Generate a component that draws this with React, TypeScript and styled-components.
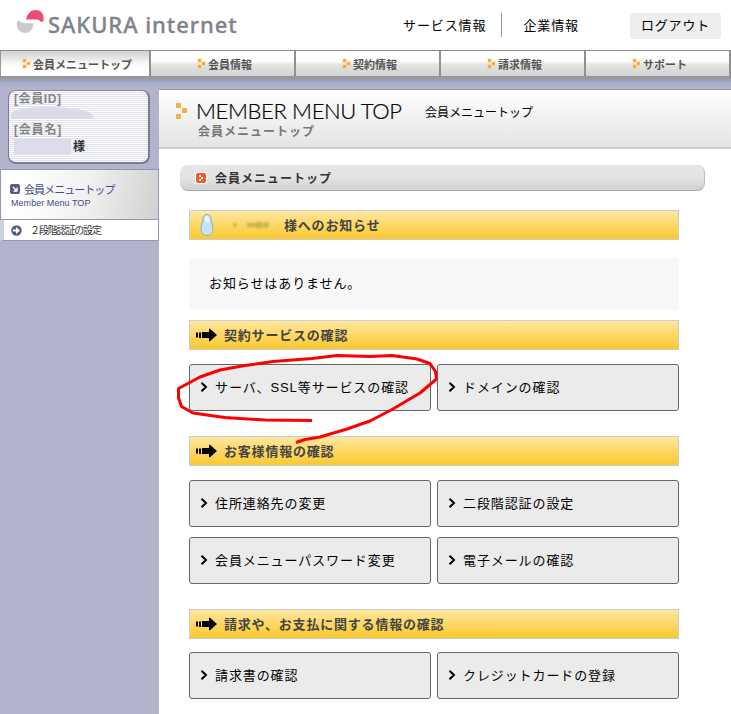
import React from "react";
import styled, { createGlobalStyle, css } from "styled-components";

const Global = createGlobalStyle`
  * { box-sizing: border-box; }
  body {
    margin: 0;
    background: #fff;
    font-family: "Liberation Sans", "Noto Sans CJK JP", sans-serif;
    color: #000;
  }
`;

const Page = styled.div`
  position: relative;
  width: 731px;
  height: 714px;
  overflow: hidden;
  display: flex;
  flex-direction: column;
`;

/* ---------- text ---------- */

const Label = styled.span<{
  $size: number;
  $track?: number;
  $weight?: number;
  $color?: string;
}>`
  padding-top: 2px;
  font-family: "Liberation Sans", "Noto Sans CJK JP", sans-serif;
  font-size: ${(p) => p.$size}px;
  letter-spacing: ${(p) => p.$track ?? 0}px;
  font-weight: ${(p) => p.$weight ?? 400};
  color: ${(p) => p.$color ?? "#000"};
  line-height: 16px;
  white-space: nowrap;
`;

/* ---------- header ---------- */

const Header = styled.header`
  height: 50px;
  flex: none;
  display: flex;
  align-items: flex-start;
  padding: 9px 10px 0 16px;
`;

const LogoMark = styled.svg`
  width: 28px;
  height: 25px;
  flex: none;
`;

const LogoText = styled.div`
  margin-left: 4px;
  font-family: "Noto Sans", sans-serif;
  font-size: 22px;
  line-height: 31px;
  font-weight: 500;
  letter-spacing: 0.93px;
  color: #82828c;
  -webkit-text-stroke: 0.3px #82828c;
  white-space: nowrap;
`;

const HeaderLinks = styled.div`
  display: flex;
  align-items: center;
  height: 32px;
  margin-left: auto;
`;

const Divider = styled.i`
  width: 1px;
  height: 24px;
  background: #999;
  margin: 0 21px 0 15px;
`;

const Logout = styled.button`
  width: 91px;
  height: 26px;
  margin: 1px 0 0 51px;
  padding: 0 0 2px 11px;
  display: flex;
  align-items: center;
  border: 0;
  border-radius: 3px;
  background: #eee;
`;

/* ---------- navigation ---------- */

const Nav = styled.nav`
  flex: none;
  height: 29px;
  display: grid;
  grid-template-columns: 151px 145px 145px 145px 145px;
  border-top: 1px solid #8c8c8c;
  border-bottom: 3px solid #989898;
`;

const Tab = styled.a<{ $active?: boolean }>`
  display: flex;
  align-items: center;
  justify-content: center;
  gap: 1px;
  padding: 0 0 0 5px;
  border-right: 2px solid #909090;
  background: ${(p) =>
    p.$active
      ? "linear-gradient(#d6d6d6 8%, #f4f4f4 45%, #fff 65%)"
      : "linear-gradient(#fff 0, #fff 40%, #e4e4e4 55%, #d2d2d2 100%)"};
  ${(p) => p.$active && css`
    border-left: 1px solid #999;
  `}
`;

const TabDots = styled.svg`
  width: 9px;
  height: 11px;
  overflow: visible;
  filter: drop-shadow(0 0 1.5px #ffc568);
`;

/* ---------- body ---------- */

const Body = styled.div`
  flex: 1;
  display: flex;
  background: linear-gradient(#939cba 0, #a8adcb 4px, #b3b3cc 9px);
`;

const Sidebar = styled.aside`
  width: 159px;
  flex: none;
  padding-top: 11px;
`;

const MemberCard = styled.section`
  width: 142px;
  height: 74px;
  margin-left: 8px;
  padding: 0 0 0 5px;
  border: 1px solid #777b98;
  border-top-color: #8588a2;
  border-width: 1px 2px 2px 1px;
  border-radius: 8px;
  background: repeating-linear-gradient(#fcfcff 0 1px, #e2e2ee 1px 2px);
  display: flex;
  flex-direction: column;
`;

const CardLine = styled.div<{ $h: number }>`
  height: ${(p) => p.$h}px;
  padding-bottom: 2px;
  display: flex;
  align-items: center;
`;

const Masked = styled.i<{ $w: number; $h: number; $round?: boolean }>`
  width: ${(p) => p.$w}px;
  height: ${(p) => p.$h}px;
  margin-left: ${(p) => (p.$round ? -3 : 0)}px;
  margin-right: 2px;
  background: #dcdbea;
  border-radius: ${(p) => (p.$round ? "40% 50% 0 0 / 60% 80% 0 0" : "0")};
`;

const SideTop = styled.a`
  display: block;
  height: 51px;
  margin-top: 5px;
  padding: 11px 0 0 9px;
  border: 1px solid #9794b4;
  background: linear-gradient(100deg, #fff 15%, #f0f0f0 55%, #cdcdcd 105%);
`;

const SideRow = styled.div`
  display: flex;
  align-items: center;
  gap: 4px;
  height: 15px;
`;

const SideLatin = styled.div`
  margin: 1px 0 0 1px;
  font-size: 9px;
  line-height: 12px;
  letter-spacing: 0.05px;
  color: #454a80;
  white-space: nowrap;
`;

const SideSub = styled.a`
  display: flex;
  align-items: center;
  gap: 8px;
  height: 21px;
  padding-left: 7px;
  border: 1px solid #9794b4;
  border-top: 0;
  border-left: 4px solid #cbd0de;
  background: #fff;
`;

const Main = styled.main`
  flex: 1;
  margin-top: 10px;
  border-top: 1px solid #9296ae;
  background: #fff;
`;

const TitleBar = styled.div`
  height: 59px;
  display: flex;
  align-items: flex-start;
  padding: 11px 0 0 17px;
  border-bottom: 2px solid #cbcbcb;
  background: linear-gradient(#fff, #e4e4e4);
`;

const TitleDots = styled.svg`
  width: 11px;
  height: 17px;
  margin: 2px 9px 0 0;
`;

const TitleStack = styled.div`
  width: 229px;
  display: flex;
  flex-direction: column;
`;

const TitleLatin = styled.h1`
  margin: 0;
  font-family: Lato, sans-serif;
  font-weight: 300;
  font-size: 22px;
  line-height: 20px;
  letter-spacing: -0.38px;
  -webkit-text-stroke: 0.2px #000;
  white-space: nowrap;
`;

const TitleSub = styled.div`
  margin: 1px 0 0 2px;
  line-height: 16px;
  display: flex;
`;

const Crumb = styled.div`
  display: flex;
  margin-top: 2px;
`;

const PageBar = styled.div`
  width: 525px;
  height: 26px;
  margin: 16px 0 0 21px;
  padding-left: 15px;
  display: flex;
  align-items: center;
  gap: 8px;
  border-radius: 8px;
  border-bottom: 1px solid #aaa;
  border-right: 1px solid #bbb;
  background: linear-gradient(#e6e6e6, #e3e3e3 50%, #d2d2d2);
`;

const Content = styled.div`
  width: 490px;
  margin: 19px 0 0 30px;
`;

const SectionHead = styled.div<{ $inset?: number }>`
  height: 30px;
  display: flex;
  align-items: center;
  padding-left: ${(p) => p.$inset ?? 6}px;
  gap: 7px;
  border: 1px solid #ccc;
  background: linear-gradient(#ffe79f, #fac82d);
`;

const Smudge = styled.svg`
  width: 53px;
  height: 12px;
  margin: 0 3px 0 0;
  filter: blur(1.2px);
`;

const Notice = styled.div`
  height: 52px;
  margin: 18px 0 10px;
  padding: 0 0 2px 20px;
  display: flex;
  align-items: center;
  background: #f8f8f8;
`;

const Grid = styled.div<{ $top: number; $bottom: number }>`
  display: grid;
  grid-template-columns: 242px 242px;
  gap: 10px 6px;
  margin: ${(p) => p.$top}px 0 ${(p) => p.$bottom}px;
`;

const Choice = styled.a`
  height: 47px;
  padding: 0 0 1px 10px;
  display: flex;
  align-items: center;
  gap: 7px;
  border: 1px solid #666;
  border-radius: 3px;
  background: #ebebeb;
`;

const Icon = styled.svg<{ $w: number; $h: number }>`
  width: ${(p) => p.$w}px;
  height: ${(p) => p.$h}px;
  flex: none;
`;

const Annotation = styled.svg`
  position: absolute;
  left: 0;
  top: 0;
  width: 731px;
  height: 714px;
  pointer-events: none;
`;

function Dots() {
  return (
    <TabDots viewBox="0 0 9 11" fill="#f7ab35">
      <rect x="0" y="1" width="3" height="3" />
      <rect x="4" y="4" width="3" height="3" />
      <rect x="0" y="7" width="3" height="3" />
    </TabDots>
  );
}

function Arrow() {
  return (
    <Icon $w={21} $h={14} viewBox="0 0 21 14">
      <path d="M0 4.500h2v5H0zM3 4.500h2v5.500H3zM6 4h7V.8h1L21 7l-7 6.300h-1V10H6z" />
    </Icon>
  );
}

function Chevron() {
  return (
    <Icon $w={8} $h={10} viewBox="0 0 8 10" fill="none" stroke="#000" strokeWidth="2">
      <path d="M1.500 .8 6 5 1.500 9.200" />
    </Icon>
  );
}

function Section({
  title,
  items,
  top = 14,
  bottom = 25,
}: {
  title: string;
  items: string[];
  top?: number;
  bottom?: number;
}) {
  return (
    <>
      <SectionHead>
        <Arrow />
        <Label $size={13} $track={0.8} $weight={700} $color="#444">{title}</Label>
      </SectionHead>
      <Grid $top={top} $bottom={bottom}>
        {items.map((item) => (
          <Choice key={item}>
            <Chevron />
            <Label $size={13} $track={0.9}>{item}</Label>
          </Choice>
        ))}
      </Grid>
    </>
  );
}

const tabs = ["会員メニュートップ", "会員情報", "契約情報", "請求情報", "サポート"];

export default function App() {
  return (
    <Page>
      <Global />
      <Header>
        <LogoMark viewBox="0 0 28 25">
          <path d="M10 10.500C11.500 4 15 1 20 1c5 0 8.500 4 7.500 10.500-.5 1-1.500 1.500-2.500 1.500-1-2-3-2.500-6-2.500z" fill="#ea4e73" />
          <path d="M1 12.500c1.500-1.500 3-.5 4 .5 2 1.500 6 1 12.500 1.500C17 20 14 24 9 24c-5.500 0-9-5-8-11.500z" fill="#cbcbcd" />
        </LogoMark>
        <LogoText>SAKURA internet</LogoText>
        <HeaderLinks>
          <Label $size={13} $track={0.9}>サービス情報</Label>
          <Divider />
          <Label $size={13} $track={0.9}>企業情報</Label>
          <Logout>
            <Label $size={13} $track={0.8}>ログアウト</Label>
          </Logout>
        </HeaderLinks>
      </Header>

      <Nav>
        {tabs.map((tab, i) => (
          <Tab key={tab} $active={i === 0}>
            <Dots />
            <Label $size={11} $weight={700} $color="#555">{tab}</Label>
          </Tab>
        ))}
      </Nav>

      <Body>
        <Sidebar>
          <MemberCard>
            <CardLine $h={15}><Label $size={12} $track={0.6} $weight={700} $color="#858585">[会員ID]</Label></CardLine>
            <CardLine $h={16}><Masked $w={82} $h={12} $round /></CardLine>
            <CardLine $h={15}><Label $size={12} $track={0.8} $weight={700} $color="#858585">[会員名]</Label></CardLine>
            <CardLine $h={20}>
              <Masked $w={57} $h={15} />
              <Label $size={12} $weight={700} $color="#333">様</Label>
            </CardLine>
          </MemberCard>
          <SideTop>
            <SideRow>
              <Icon $w={10} $h={10} viewBox="0 0 10 10">
                <rect width="10" height="10" rx="2" fill="#555a87" />
                <path d="M3 3l4 4M7 3.500V7H3.500" stroke="#fff" strokeWidth="1.300" fill="none" />
              </Icon>
              <Label $size={11} $track={-0.95} $color="#454a80">会員メニュートップ</Label>
            </SideRow>
            <SideLatin>Member Menu TOP</SideLatin>
          </SideTop>
          <SideSub>
            <Icon $w={11} $h={11} viewBox="0 0 11 11">
              <circle cx="5.500" cy="5.500" r="5.200" fill="#555a87" />
              <path d="M2 4.500h3V2l4 3.500L5 9V6.500H2z" fill="#fff" />
            </Icon>
            <Label $size={10} $track={-1.15} $color="#333">２段階認証の設定</Label>
          </SideSub>
        </Sidebar>

        <Main>
          <TitleBar>
            <TitleDots viewBox="0 0 11 17" fill="#f7b045">
              <rect x="0" y="0" width="5" height="5" />
              <rect x="6" y="5" width="5" height="5" />
              <rect x="0" y="11" width="5" height="5" />
            </TitleDots>
            <TitleStack>
              <TitleLatin>MEMBER MENU TOP</TitleLatin>
              <TitleSub>
                <Label $size={12} $track={1} $weight={700} $color="#777">会員メニュートップ</Label>
              </TitleSub>
            </TitleStack>
            <Crumb><Label $size={12}>会員メニュートップ</Label></Crumb>
          </TitleBar>

          <PageBar>
            <Icon $w={12} $h={12} viewBox="0 0 12 12">
              <rect width="12" height="12" rx="2.500" fill="#fff" />
              <rect x="1" y="1" width="10" height="10" rx="2" fill="#ee5a2c" />
              <path d="M4 3h2v2H4zM6 5h2v2H6zM4 7h2v2H4z" fill="#fff" />
            </Icon>
            <Label $size={12} $track={1} $weight={700} $color="#333">会員メニュートップ</Label>
          </PageBar>

          <Content>
            <SectionHead $inset={10}>
              <Icon $w={14} $h={24} viewBox="0 0 14 24">
                <path
                  d="M7 1.500c-2.700 0-4 2-4 4.500 0 3-2 6-2 9.500C1 20 3.500 22.500 7 22.500s6-2.500 6-7c0-3.500-2-6.500-2-9.500 0-2.500-1.300-4.500-4-4.500z"
                  fill="#c5e2fb" stroke="#8fa9b5" strokeWidth="1"
                />
                <path d="M7 3C5 3 4.600 5 5 7s1 3 3 3 1.500-2 1.500-4S9 3 7 3z" fill="#e9f5ff" />
              </Icon>
              <Smudge viewBox="0 0 53 12" fill="#aaa044" opacity=".65">
                <circle cx="14" cy="6" r="2" />
                <rect x="26" y="4" width="9" height="4" />
                <circle cx="38" cy="6" r="3.500" />
                <circle cx="45" cy="6" r="3" />
              </Smudge>
              <Label $size={13} $track={0.8} $weight={700} $color="#444">様へのお知らせ</Label>
            </SectionHead>
            <Notice><Label $size={13} $track={0.9}>お知らせはありません。</Label></Notice>
            <Section title="契約サービスの確認" items={["サーバ、SSL等サービスの確認", "ドメインの確認"]} />
            <Section
              title="お客様情報の確認"
              items={["住所連絡先の変更", "二段階認証の設定", "会員メニューパスワード変更", "電子メールの確認"]}
            />
            <Section
              title="請求や、お支払に関する情報の確認"
              items={["請求書の確認", "クレジットカードの登録"]}
              top={13}
              bottom={0}
            />
          </Content>
        </Main>
      </Body>

      <Annotation viewBox="0 0 731 714">
        <path
          d="M312 420.500L265 420L240 418.500L225 417.500L214 416L193 413L181.500 406.500L178.500 398V388.500L200 377L220 370L245 365.500L273 361.500L312 358.500L337 355.500L370 356.500L392 355.500L417 359L430 363.500L435.500 371.500L436.500 379L420 393L392 409.500L370 421L347 429L320 437L305 439.500L296 442.500"
          fill="none" stroke="#f00" strokeWidth="3" strokeLinejoin="round"
        />
      </Annotation>
    </Page>
  );
}
